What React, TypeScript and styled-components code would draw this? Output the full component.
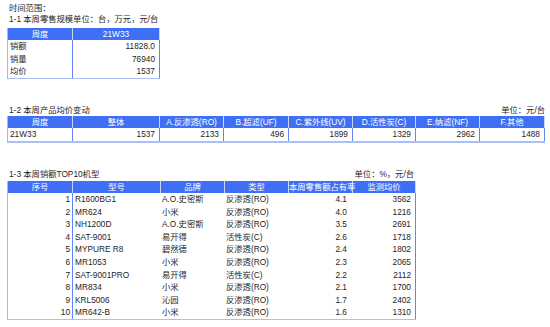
import React from "react";
import styled, { createGlobalStyle } from "styled-components";

const Global = createGlobalStyle`
  html, body { margin: 0; padding: 0; background: #ffffff; }
  body { font-family: "Liberation Sans", "Noto Sans CJK SC", sans-serif; }
`;

const Page = styled.div`
  width: 550px;
  height: 327px;
  padding: 3px 0 0 7px;
  box-sizing: border-box;
  display: flex;
  flex-direction: column;
  font-size: 8.3px;
  color: #1e1e1e;
  overflow: hidden;
`;

const Line = styled.div<{ $mt?: number }>`
  height: 11px;
  line-height: 11px;
  padding-left: 2px;
  margin-top: ${(p) => p.$mt ?? 0}px;
  white-space: nowrap;
`;

const TitleRow = styled.div<{ $width: number; $mt?: number }>`
  width: ${(p) => p.$width}px;
  height: 11px;
  line-height: 11px;
  margin-top: ${(p) => p.$mt ?? 0}px;
  display: flex;
  justify-content: space-between;
  padding-left: 2px;
  box-sizing: border-box;
  white-space: nowrap;
`;

const Table = styled.div<{ $mt?: number; $bottom?: number }>`
  margin-top: ${(p) => p.$mt ?? 0}px;
  align-self: flex-start;
  border-left: 1px solid #9fb8f6;
  border-bottom: ${(p) => p.$bottom ?? 1}px solid #a9c0f7;
`;

const Row = styled.div<{ $cols: string; $head?: boolean; $h: number }>`
  display: grid;
  grid-template-columns: ${(p) => p.$cols};
  height: ${(p) => p.$h}px;
  line-height: ${(p) => p.$h}px;
  background: ${(p) => (p.$head ? "#3f6ff5" : "#ffffff")};
  color: ${(p) => (p.$head ? "#ffffff" : "#1e1e1e")};
`;

const Cell = styled.div<{ $align?: "left" | "right" | "center"; $div?: "head" | "body" | "none"; $pad?: number }>`
  box-sizing: border-box;
  white-space: nowrap;
  overflow: visible;
  text-align: ${(p) => p.$align ?? "left"};
  padding: 0 ${(p) => (p.$align === "right" ? p.$pad ?? 4 : 0)}px 0 ${(p) => (p.$align === "left" ? p.$pad ?? 2 : 0)}px;
  border-right: 1px solid
    ${(p) => (p.$div === "head" ? "#c9d7fc" : p.$div === "none" ? "transparent" : "#5f86f2")};
`;

const t1Cols = "65px 87px";
const t2Cols = "65px 87px 64px 65px 64px 63px 64px 65px";
const t3Cols = "65px 88px 64px 64px 64px 63px";

const t2Head = ["周度", "整体", "A.反渗透(RO)", "B.超滤(UF)", "C.紫外线(UV)", "D.活性炭(C)", "E.纳滤(NF)", "F.其他"];
const t2Data = ["1537", "2133", "496", "1899", "1329", "2962", "1488"];

const t3Head = ["序号", "型号", "品牌", "类型", "本周零售额占有率", "监测均价"];
const t3Data: [string, string, string, string, string][] = [
  ["R1600BG1", "A.O.史密斯", "反渗透(RO)", "4.1", "3562"],
  ["MR624", "小米", "反渗透(RO)", "4.0", "1216"],
  ["NH1200D", "A.O.史密斯", "反渗透(RO)", "3.5", "2691"],
  ["SAT-9001", "易开得", "活性炭(C)", "2.6", "1718"],
  ["MYPURE R8", "碧然德", "反渗透(RO)", "2.4", "1802"],
  ["MR1053", "小米", "反渗透(RO)", "2.3", "2065"],
  ["SAT-9001PRO", "易开得", "活性炭(C)", "2.2", "2112"],
  ["MR834", "小米", "反渗透(RO)", "2.1", "1700"],
  ["KRL5006", "沁园", "反渗透(RO)", "1.7", "2402"],
  ["MR642-B", "小米", "反渗透(RO)", "1.6", "1310"],
];

export default function App() {
  return (
    <>
      <Global />
      <Page>
        <Line>时间范围：</Line>
        <Line>1-1 本周零售规模单位：台，万元，元/台</Line>
        <Table $mt={3}>
          <Row $cols={t1Cols} $head $h={12}>
            <Cell $align="center" $div="head">周度</Cell>
            <Cell $align="center" $div="head">21W33</Cell>
          </Row>
          {[
            ["销额", "11828.0"],
            ["销量", "76940"],
            ["均价", "1537"],
          ].map(([k, v]) => (
            <Row key={k} $cols={t1Cols} $h={12.67}>
              <Cell $align="left">{k}</Cell>
              <Cell $align="right">{v}</Cell>
            </Row>
          ))}
        </Table>

        <TitleRow $width={538} $mt={26}>
          <span>1-2 本周产品均价变动</span>
          <span>单位：元/台</span>
        </TitleRow>
        <Table $mt={0} $bottom={2}>
          <Row $cols={t2Cols} $head $h={12}>
            {t2Head.map((h) => (
              <Cell key={h} $align="center" $div="head">{h}</Cell>
            ))}
          </Row>
          <Row $cols={t2Cols} $h={13}>
            <Cell $align="left">21W33</Cell>
            {t2Data.map((d, i) => (
              <Cell key={i} $align="right">{d}</Cell>
            ))}
          </Row>
        </Table>

        <TitleRow $width={407} $mt={26}>
          <span>1-3 本周销额TOP10机型</span>
          <span>单位：%，元/台</span>
        </TitleRow>
        <Table $mt={1}>
          <Row $cols={t3Cols} $head $h={12}>
            {t3Head.map((h) => (
              <Cell key={h} $align="center" $div="head">{h}</Cell>
            ))}
          </Row>
          {t3Data.map((r, i) => (
            <Row key={i} $cols={t3Cols} $h={12.6}>
              <Cell $align="right" $pad={2}>{i + 1}</Cell>
              <Cell $align="left" $div="none">{r[0]}</Cell>
              <Cell $align="left" $div="none" $pad={1}>{r[1]}</Cell>
              <Cell $align="left" $div="none" $pad={1}>{r[2]}</Cell>
              <Cell $align="right" $div="none" $pad={5}>{r[3]}</Cell>
              <Cell $align="right">{r[4]}</Cell>
            </Row>
          ))}
        </Table>
      </Page>
    </>
  );
}
